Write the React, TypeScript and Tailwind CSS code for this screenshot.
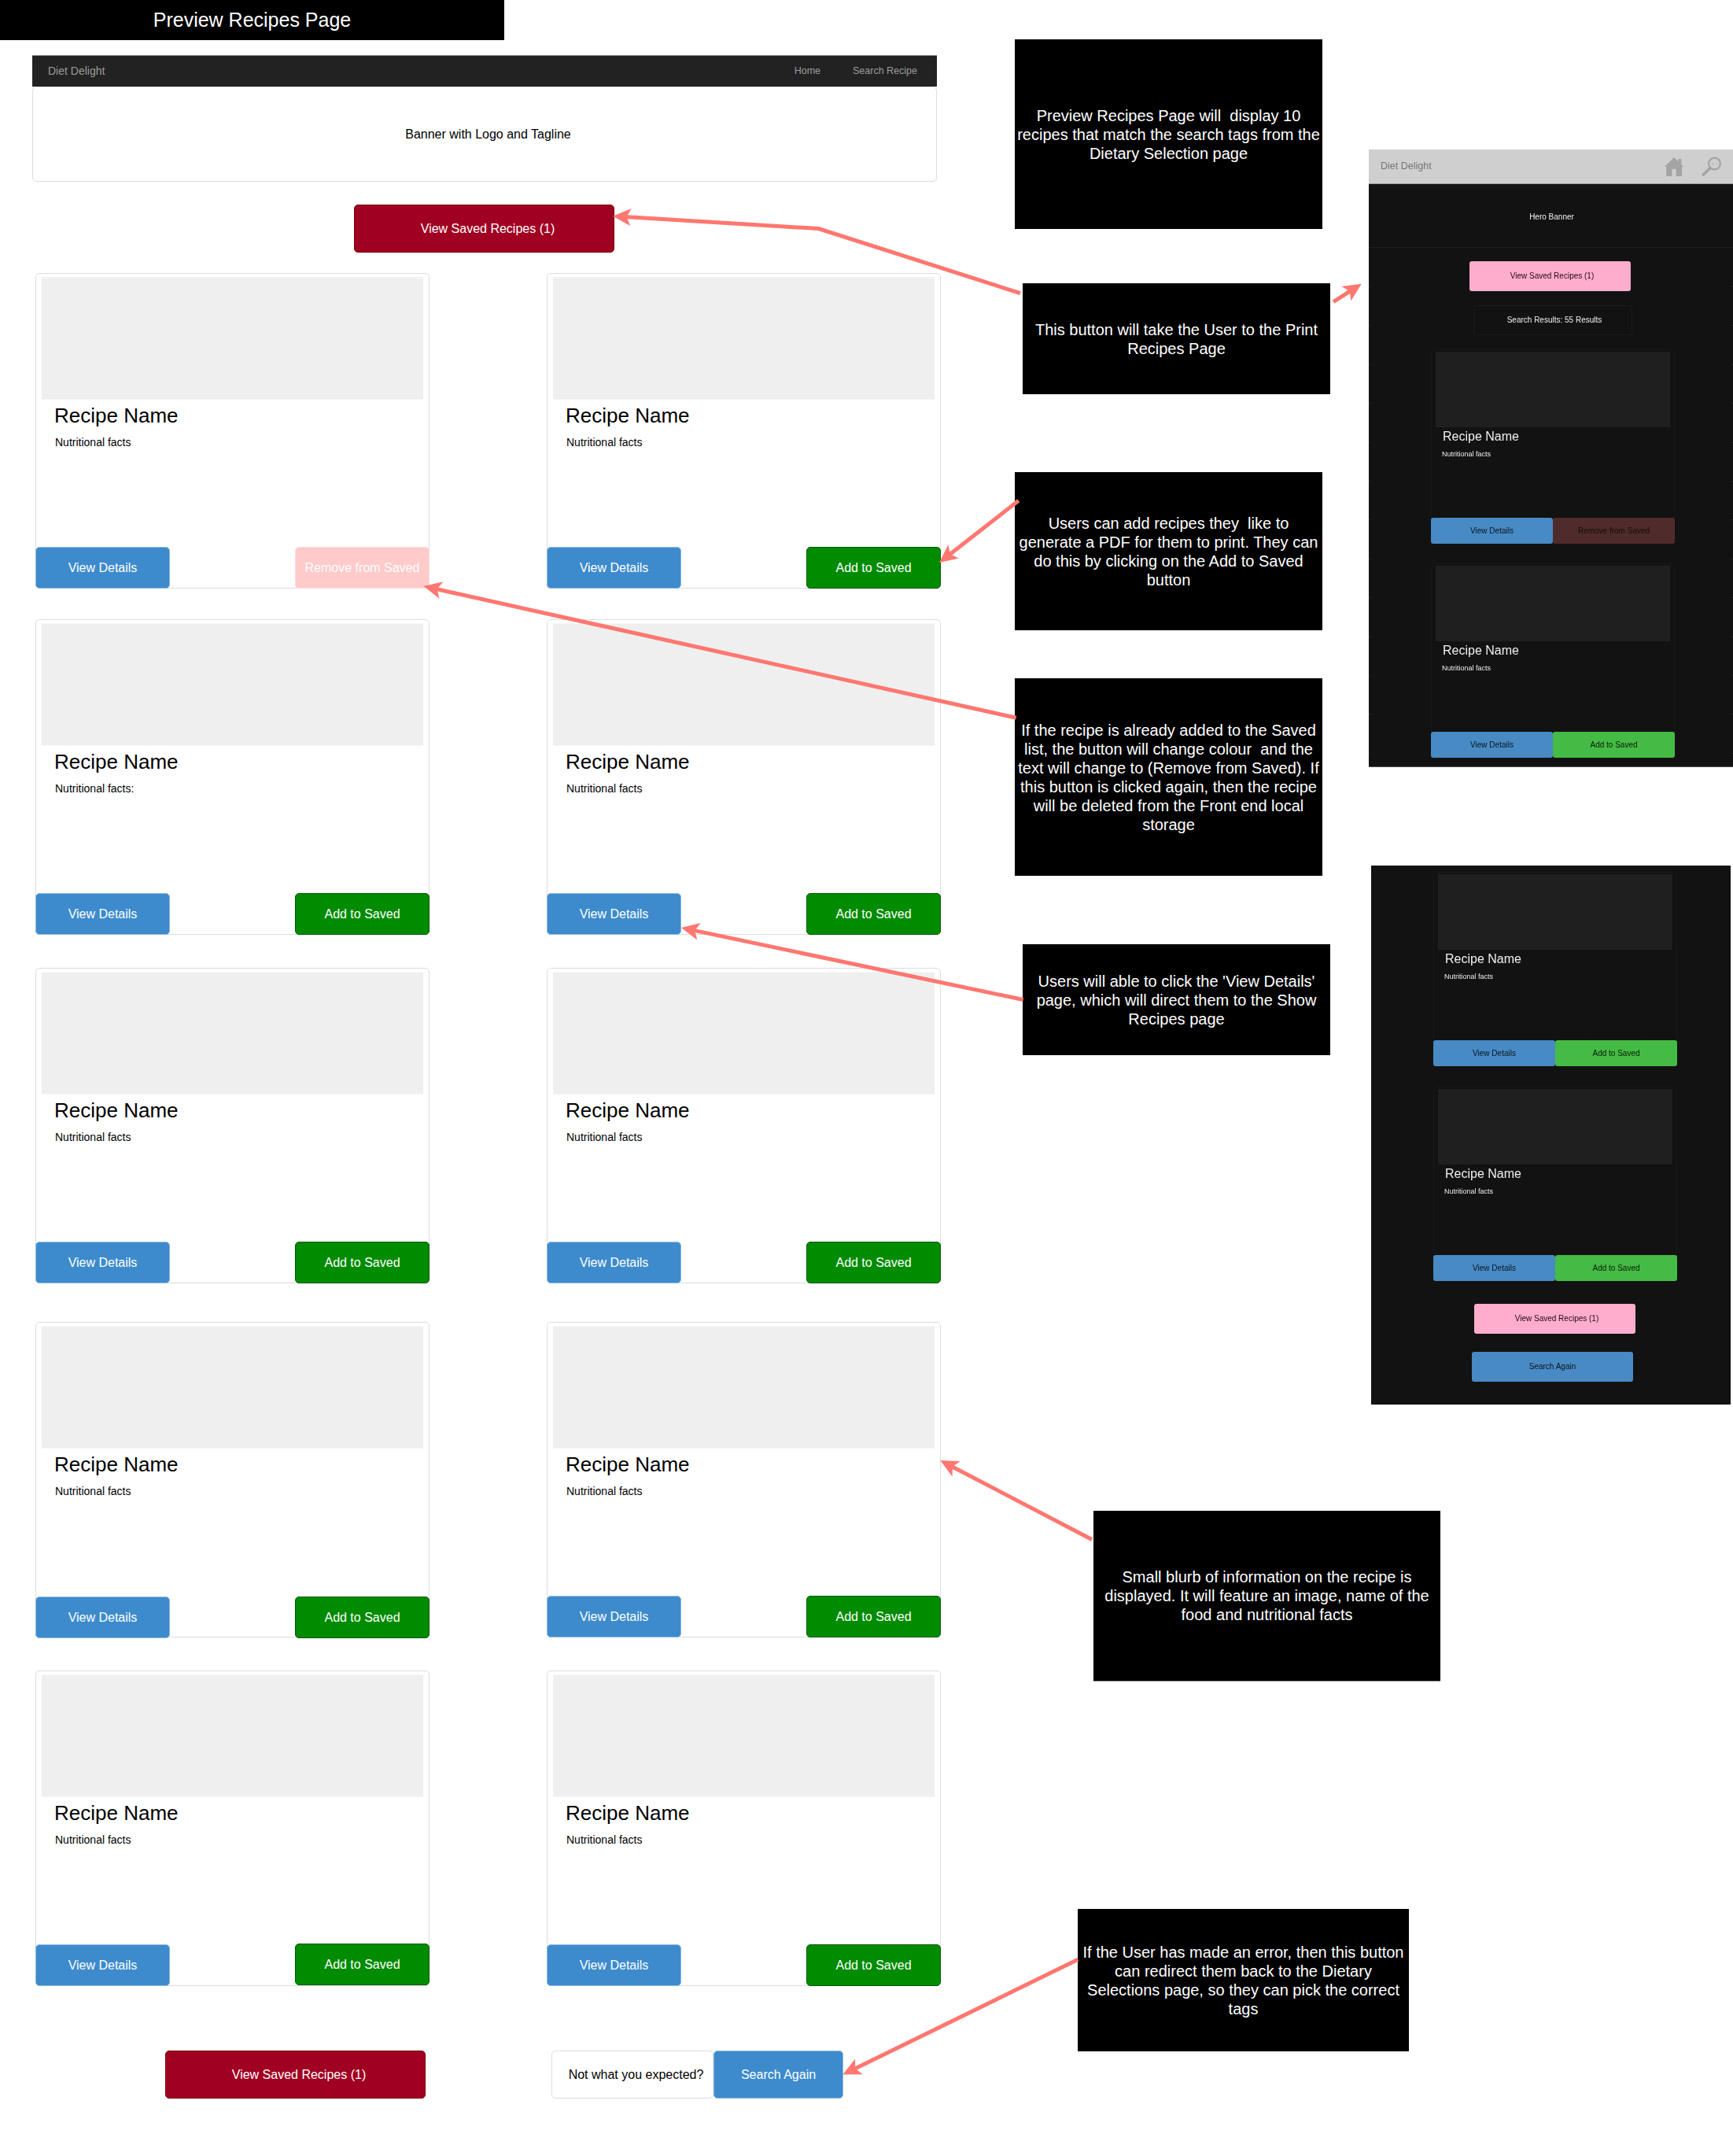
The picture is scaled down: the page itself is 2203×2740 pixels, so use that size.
import React from "react";

type Point = [number, number];

const DESKTOP_ROWS = [
  { gap: "", left: "Nutritional facts", saved: true, viewShift: "", addShift: "" },
  { gap: "mt-[39px]", left: "Nutritional facts:", saved: false, viewShift: "", addShift: "" },
  { gap: "mt-[42px]", left: "Nutritional facts", saved: false, viewShift: "", addShift: "" },
  { gap: "mt-[49px]", left: "Nutritional facts", saved: false, viewShift: "relative top-px", addShift: "relative top-px" },
  { gap: "mt-[42px]", left: "Nutritional facts", saved: false, viewShift: "", addShift: "relative -top-px" },
];

function Button({ className, children }: { className: string; children: React.ReactNode }) {
  return (
    <div className={`flex shrink-0 items-center justify-center rounded-[5px] border text-[16px] leading-[18px] whitespace-nowrap ${className}`}>
      {children}
    </div>
  );
}

function SavedButton({ className }: { className: string }) {
  return (
    <Button className={`h-[61px] w-[331px] border-[#7a0000] bg-[#a00022] pl-[9px] text-white ${className}`}>
      View Saved Recipes (1)
    </Button>
  );
}

type RecipeCardProps = { facts: string; saved?: boolean; viewShift?: string; addShift?: string };

function RecipeCard({ facts, saved = false, viewShift = "", addShift = "" }: RecipeCardProps) {
  return (
    <div className="flex h-[401px] w-[501px] flex-col rounded-[5px] border border-[#dddddd]">
      <div className="mt-1 ml-[7px] h-[156px] w-[485px] border-y border-[#f7f7f7] bg-[#efefef]" />
      <div className="mt-[5px] ml-[23px] text-[26px] leading-[30px]">Recipe Name</div>
      <div className="mt-[9px] ml-[24px] text-[14px] leading-[20px]">{facts}</div>
      <div className="-mx-px mt-auto -mb-px flex justify-between">
        <Button className={`h-[53px] w-[171px] border-[#8db9e0] bg-[#3d8bcd] text-white ${viewShift}`}>View Details</Button>
        {saved ? (
          <Button className="h-[53px] w-[171px] border-[#ffdcdc] bg-[#ffcaca] text-white">Remove from Saved</Button>
        ) : (
          <Button className={`h-[53px] w-[171px] border-[#005a00] bg-[#008b00] text-white ${addShift}`}>Add to Saved</Button>
        )}
      </div>
    </div>
  );
}

function Note({ className, lines }: { className: string; lines: string[] }) {
  return (
    <div className={`flex shrink-0 flex-col items-center justify-center bg-black text-[20px] leading-[24px] text-white ${className}`}>
      {lines.map((line) => (
        <div key={line} className="whitespace-pre">{line}</div>
      ))}
    </div>
  );
}

function MobileButton({ className, children }: { className: string; children: React.ReactNode }) {
  return (
    <div className={`flex shrink-0 items-center justify-center rounded-[3px] text-[10px] leading-[12px] whitespace-nowrap ${className}`}>
      {children}
    </div>
  );
}

function MobileCard({ className, saved }: { className: string; saved?: boolean }) {
  return (
    <div className={`flex h-[247px] w-[310px] shrink-0 flex-col rounded-[5px] border border-[#191919] ${className}`}>
      <div className="mt-[2px] ml-[5px] h-[96px] w-[298px] bg-[#1f1f1f]" />
      <div className="mt-[2px] ml-[14px] text-[16px] leading-[20px] text-[#f0f0f0]">Recipe Name</div>
      <div className="mt-[6px] ml-[13px] text-[9px] leading-[12px] text-[#f0f0f0]">Nutritional facts</div>
      <div className="-mx-px mt-auto -mb-px flex">
        <MobileButton className="h-[33px] w-[155px] bg-[#478ac4] text-[#0a141e]">View Details</MobileButton>
        {saved ? (
          <MobileButton className="h-[33px] w-[155px] bg-[#502b2b] text-[#140c0c]">Remove from Saved</MobileButton>
        ) : (
          <MobileButton className="h-[33px] w-[155px] bg-[#44bb44] text-[#081a08]">Add to Saved</MobileButton>
        )}
      </div>
    </div>
  );
}

function HomeIcon() {
  return (
    <svg width="24" height="24" viewBox="0 0 24 24" fill="#a4a4a4">
      <path d="M12 0 L0 12 H2.2 V24 H9.4 V14.8 H14.6 V24 H22 V12 H24 L21.4 9 V2 H17.4 V5.2 Z" />
    </svg>
  );
}

function SearchIcon() {
  return (
    <svg width="26" height="25" viewBox="0 0 26 25" fill="none" stroke="#a4a4a4">
      <circle cx="16.5" cy="9" r="7.4" strokeWidth="2.3" />
      <path d="M11 14.6 L2.2 23" strokeWidth="3.6" strokeLinecap="round" />
      <path d="M13.5 8 V9.5 H16 M19.5 7.5 V10" strokeWidth="0.9" stroke="#b4b4b4" />
    </svg>
  );
}

const ARROWS: Point[][] = [
  [[1297, 372.7], [1040.5, 290.5], [779, 274.7]],
  [[1695, 383.7], [1730.7, 360.7]],
  [[1294.8, 636.3], [1194, 715]],
  [[1291.7, 912.3], [538.5, 745]],
  [[1300.7, 1270.5], [866, 1179]],
  [[1388, 1956.5], [1195.3, 1856]],
  [[1370.3, 2490.3], [1071.3, 2636.5]],
];

function Arrow({ points }: { points: Point[] }) {
  const [tx, ty] = points[points.length - 1];
  const [px, py] = points[points.length - 2];
  const len = Math.hypot(tx - px, ty - py);
  const ux = (tx - px) / len;
  const uy = (ty - py) / len;
  const at = (back: number, side: number) => `${tx - ux * back - uy * side},${ty - uy * back + ux * side}`;
  const shaft = [...points.slice(0, -1).map((p) => p.join(",")), at(15, 0)].join(" ");
  return (
    <g>
      <polyline points={shaft} fill="none" stroke="#ff7770" strokeWidth="5" />
      <polygon points={[at(0, 0), at(23, 11), at(17.5, 0), at(23, -11)].join(" ")} fill="#ff7770" />
    </g>
  );
}

const EDGE_TICKS = [0, 1, 2, 3, 4, 5, 6, 7, 8, 9, 10, 11, 12];

function TickColumn() {
  return (
    <div className="flex w-[2px] flex-col pt-[49px]">
      {EDGE_TICKS.map((n) => (
        <div key={n} className="mb-[48.4px] h-px shrink-0 bg-[#2a2a2a]" />
      ))}
    </div>
  );
}

export default function App() {
  return (
    <div
      className="relative flex h-[2740px] w-[2203px] overflow-hidden bg-white text-black"
      style={{ fontFamily: '"Liberation Sans", Arial, sans-serif' }}
    >
      {/* Desktop wireframe */}
      <main className="w-[1290px] shrink-0">
        <h1 className="flex h-[51px] w-[641px] items-center justify-center bg-black text-[25px] text-white">
          Preview Recipes Page
        </h1>
        <nav className="mt-[19px] ml-[41px] flex h-[40px] w-[1150px] items-center border-t border-[#8c8c8c] bg-[#222222] text-[#9d9d9d]">
          <span className="ml-[20px] text-[14px]">Diet Delight</span>
          <span className="ml-auto text-[12.5px]">Home</span>
          <span className="mr-[25px] ml-[41px] text-[12.5px]">Search Recipe</span>
        </nav>
        <div className="ml-[41px] flex h-[121px] w-[1150px] items-center justify-center rounded-[5px] border border-[#dddddd] pl-[9px] text-[16px]">
          Banner with Logo and Tagline
        </div>
        <SavedButton className="mt-[29px] ml-[450px]" />
        <section className="mt-[26px] ml-[45px]">
          {DESKTOP_ROWS.map((row, i) => (
            <div key={i} className={`flex gap-[149px] ${row.gap}`}>
              <RecipeCard facts={row.left} saved={row.saved} viewShift={row.viewShift} addShift={row.addShift} />
              <RecipeCard facts="Nutritional facts" />
            </div>
          ))}
        </section>
        <div className="mt-[82px] flex">
          <SavedButton className="ml-[210px]" />
          <Button className="ml-[160px] h-[61px] w-[206px] border-[#dddddd] pl-[9px] text-black">Not what you expected?</Button>
          <Button className="h-[61px] w-[165px] border-[#8db9e0] bg-[#3d8bcd] text-white">Search Again</Button>
        </div>
      </main>

      <aside className="w-[913px] shrink-0">
        <div className="flex h-[1785px]">
          {/* Annotations */}
          <div className="flex w-[450px] shrink-0 flex-col">
            <Note
              className="mt-[50px] h-[241px] w-[391px]"
              lines={["Preview Recipes Page will  display 10", "recipes that match the search tags from the", "Dietary Selection page"]}
            />
            <Note
              className="mt-[69px] ml-[10px] h-[141px] w-[391px]"
              lines={["This button will take the User to the Print", "Recipes Page"]}
            />
            <Note
              className="mt-[99px] h-[201px] w-[391px]"
              lines={["Users can add recipes they  like to", "generate a PDF for them to print. They can", "do this by clicking on the Add to Saved", "button"]}
            />
            <Note
              className="mt-[61px] h-[251px] w-[391px]"
              lines={[
                "If the recipe is already added to the Saved",
                "list, the button will change colour  and the",
                "text will change to (Remove from Saved). If",
                "this button is clicked again, then the recipe",
                "will be deleted from the Front end local",
                "storage",
              ]}
            />
            <Note
              className="mt-[87px] ml-[10px] h-[141px] w-[391px]"
              lines={["Users will able to click the 'View Details'", "page, which will direct them to the Show", "Recipes page"]}
            />
          </div>

          {/* Mobile wireframes */}
          <div className="w-[463px] shrink-0">
            <div className="mt-[190px] h-[785px] w-[463px] border-b border-[#555555] bg-[#121212]">
              <div className="flex h-[44px] items-center border-b border-[#9a9a9a] bg-[#cfcfcf]">
                <span className="ml-[15px] text-[12.5px] text-[#747474] blur-[0.4px]">Diet Delight</span>
                <div className="ml-auto blur-[0.4px]"><HomeIcon /></div>
                <div className="mr-[14px] ml-[23px] blur-[0.4px]"><SearchIcon /></div>
              </div>
              <div className="flex h-[81px] items-center justify-center border-b border-[#1e1e1e] pt-[3px] pl-[2px] text-[10px] text-[#f0f0f0]">
                <span className="blur-[0.4px]">Hero Banner</span>
              </div>
              <div className="flex h-[659px] justify-between">
                <TickColumn />
                <div className="flex w-[459px] flex-col blur-[0.4px]">
                  <MobileButton className="mt-[17px] ml-[126px] h-[38px] w-[205px] bg-[#ffadcd] pl-[5px] text-[#200810]">
                    View Saved Recipes (1)
                  </MobileButton>
                  <MobileButton className="mt-[18px] ml-[131px] h-[38px] w-[202px] border border-[#1b1b1b] pl-[4px] text-[#f0f0f0]">
                    Search Results: 55 Results
                  </MobileButton>
                  <MobileCard className="mt-[18px] ml-[77px]" saved />
                  <MobileCard className="mt-[25px] ml-[77px]" />
                </div>
                <TickColumn />
              </div>
            </div>

            <div className="mt-[125px] ml-[3px] h-[685px] w-[457px] bg-[#121212]">
              <div className="flex flex-col pt-[8px] blur-[0.4px]">
                <MobileCard className="ml-[79px]" />
                <MobileCard className="mt-[26px] ml-[79px]" />
                <MobileButton className="mt-[29px] ml-[131px] h-[38px] w-[205px] bg-[#ffadcd] pl-[5px] text-[#200810]">
                  View Saved Recipes (1)
                </MobileButton>
                <MobileButton className="mt-[23px] ml-[128px] h-[38px] w-[205px] bg-[#478ac4] text-[#0a141e]">
                  Search Again
                </MobileButton>
              </div>
            </div>
          </div>
        </div>

        <Note
          className="mt-[135px] ml-[100px] h-[217px] w-[441px] border-b border-[#8a8a8a]"
          lines={["Small blurb of information on the recipe is", "displayed. It will feature an image, name of the", "food and nutritional facts"]}
        />
        <Note
          className="mt-[289px] ml-[80px] h-[181px] w-[421px]"
          lines={["If the User has made an error, then this button", "can redirect them back to the Dietary", "Selections page, so they can pick the correct", "tags"]}
        />
      </aside>

      {/* Connector arrows drawn over the board */}
      <svg className="pointer-events-none absolute inset-0" width="2203" height="2740" viewBox="0 0 2203 2740">
        {ARROWS.map((points, i) => (
          <Arrow key={i} points={points} />
        ))}
      </svg>
    </div>
  );
}
